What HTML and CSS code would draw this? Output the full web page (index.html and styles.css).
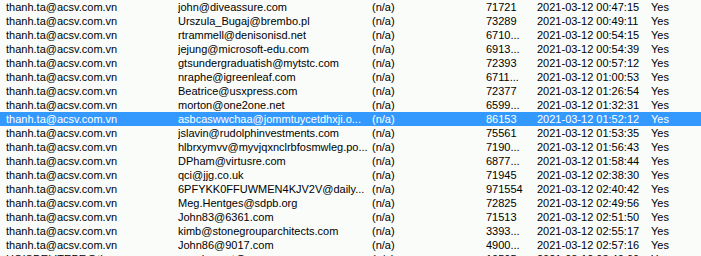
FILE: index.html
```html
<!DOCTYPE html>
<html>
<head>
<meta charset="utf-8">
<link rel="stylesheet" href="styles.css">
</head>
<body>
<div class="list">
  <div class="row"><span>thanh.ta@acsv.com.vn</span><span>john@diveassure.com</span><span>(n/a)</span><span>71721</span><span>2021-03-12 00:47:15</span><span>Yes</span></div>
  <div class="row"><span>thanh.ta@acsv.com.vn</span><span>Urszula_Bugaj@brembo.pl</span><span>(n/a)</span><span>73289</span><span>2021-03-12 00:49:11</span><span>Yes</span></div>
  <div class="row"><span>thanh.ta@acsv.com.vn</span><span>rtrammell@denisonisd.net</span><span>(n/a)</span><span>6710...</span><span>2021-03-12 00:54:15</span><span>Yes</span></div>
  <div class="row"><span>thanh.ta@acsv.com.vn</span><span>jejung@microsoft-edu.com</span><span>(n/a)</span><span>6913...</span><span>2021-03-12 00:54:39</span><span>Yes</span></div>
  <div class="row"><span>thanh.ta@acsv.com.vn</span><span>gtsundergraduatish@mytstc.com</span><span>(n/a)</span><span>72393</span><span>2021-03-12 00:57:12</span><span>Yes</span></div>
  <div class="row"><span>thanh.ta@acsv.com.vn</span><span>nraphe@igreenleaf.com</span><span>(n/a)</span><span>6711...</span><span>2021-03-12 01:00:53</span><span>Yes</span></div>
  <div class="row"><span>thanh.ta@acsv.com.vn</span><span>Beatrice@usxpress.com</span><span>(n/a)</span><span>72377</span><span>2021-03-12 01:26:54</span><span>Yes</span></div>
  <div class="row"><span>thanh.ta@acsv.com.vn</span><span>morton@one2one.net</span><span>(n/a)</span><span>6599...</span><span>2021-03-12 01:32:31</span><span>Yes</span></div>
  <div class="row selected"><span>thanh.ta@acsv.com.vn</span><span>asbcaswwchaa@jommtuycetdhxji.o...</span><span>(n/a)</span><span>86153</span><span>2021-03-12 01:52:12</span><span>Yes</span></div>
  <div class="row"><span>thanh.ta@acsv.com.vn</span><span>jslavin@rudolphinvestments.com</span><span>(n/a)</span><span>75561</span><span>2021-03-12 01:53:35</span><span>Yes</span></div>
  <div class="row"><span>thanh.ta@acsv.com.vn</span><span>hlbrxymvv@myvjqxnclrbfosmwleg.po...</span><span>(n/a)</span><span>7190...</span><span>2021-03-12 01:56:43</span><span>Yes</span></div>
  <div class="row"><span>thanh.ta@acsv.com.vn</span><span>DPham@virtusre.com</span><span>(n/a)</span><span>6877...</span><span>2021-03-12 01:58:44</span><span>Yes</span></div>
  <div class="row"><span>thanh.ta@acsv.com.vn</span><span>qci@jjg.co.uk</span><span>(n/a)</span><span>71945</span><span>2021-03-12 02:38:30</span><span>Yes</span></div>
  <div class="row"><span>thanh.ta@acsv.com.vn</span><span>6PFYKK0FFUWMEN4KJV2V@daily...</span><span>(n/a)</span><span>971554</span><span>2021-03-12 02:40:42</span><span>Yes</span></div>
  <div class="row"><span>thanh.ta@acsv.com.vn</span><span>Meg.Hentges@sdpb.org</span><span>(n/a)</span><span>72825</span><span>2021-03-12 02:49:56</span><span>Yes</span></div>
  <div class="row"><span>thanh.ta@acsv.com.vn</span><span>John83@6361.com</span><span>(n/a)</span><span>71513</span><span>2021-03-12 02:51:50</span><span>Yes</span></div>
  <div class="row"><span>thanh.ta@acsv.com.vn</span><span>kimb@stonegrouparchitects.com</span><span>(n/a)</span><span>3393...</span><span>2021-03-12 02:55:17</span><span>Yes</span></div>
  <div class="row"><span>thanh.ta@acsv.com.vn</span><span>John86@9017.com</span><span>(n/a)</span><span>4900...</span><span>2021-03-12 02:57:16</span><span>Yes</span></div>
  <div class="row"><span>HOISDELITEPE@th...</span><span>nnrwjmeent@...</span><span>(n/a)</span><span>10505</span><span>2021-03-12 03:40:00</span><span>Yes</span></div>
</div>
</body>
</html>
```
FILE: styles.css
```css
html, body {
  margin: 0;
  padding: 0;
  background: #fafcfa;
  overflow: hidden;
}
.list {
  font-family: "Liberation Sans", Arial, sans-serif;
  font-size: 11px;
  color: #000;
}
.row {
  display: grid;
  grid-template-columns: 172px 194px 114px 51px 114px 1fr;
  height: 14px;
  line-height: 14px;
  padding-left: 6px;
  white-space: nowrap;
}
.row span {
  overflow: hidden;
}
.row.selected {
  background: #3399ff;
  color: #fff;
}
```
